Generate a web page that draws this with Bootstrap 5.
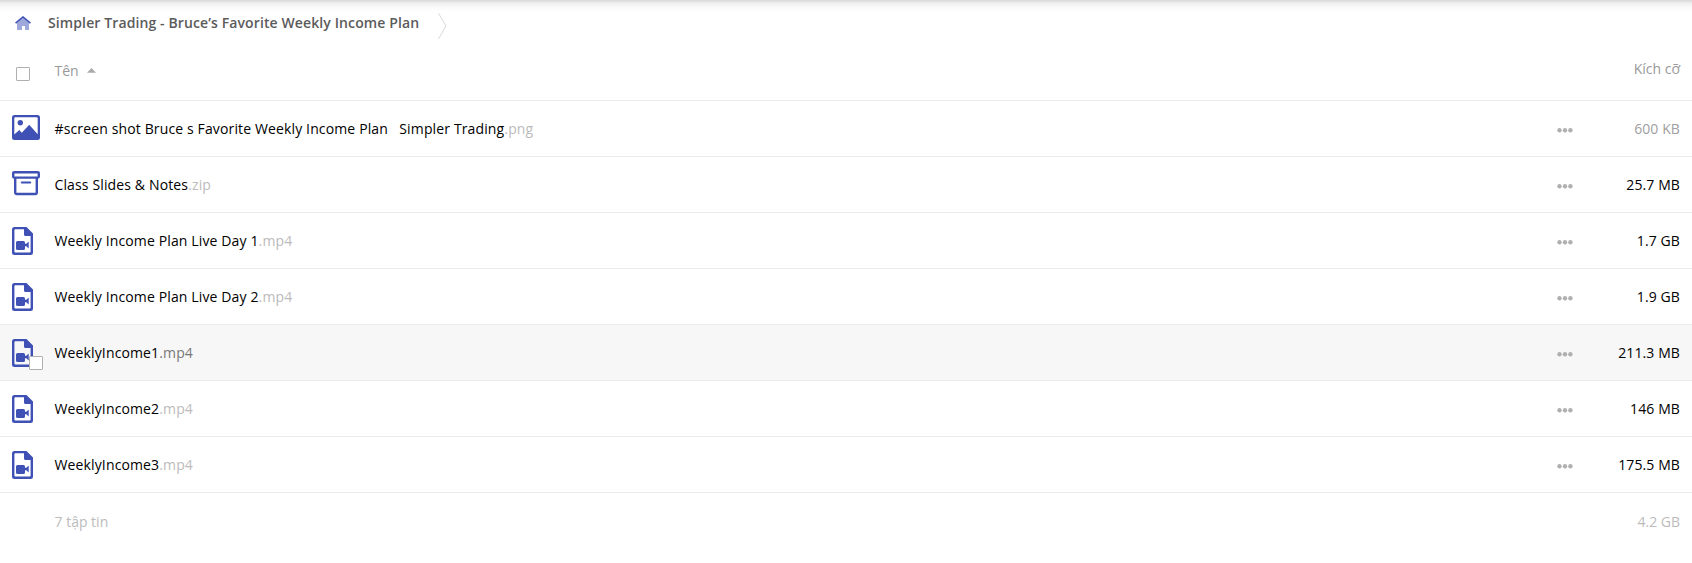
<!DOCTYPE html>
<html lang="vi">
<head>
<meta charset="utf-8">
<meta name="viewport" content="width=device-width, initial-scale=1">
<title>Simpler Trading</title>
<link rel="stylesheet" href="https://cdn.jsdelivr.net/npm/bootstrap@5.3.0/dist/css/bootstrap.min.css">
<style>
body{font-family:"Open Sans","Noto Sans",sans-serif;font-size:14px;line-height:20px;color:#000;background:#fff;overflow:hidden}
.top-shade{height:12px;background:linear-gradient(#d9d9d9 0,#dedede 1px,#efefef 3px,#f9f9f9 7px,#fff 12px)}
.crumbs{height:32px;padding-left:15px}
.crumbs svg{flex:none}
.home-icon{margin-top:4px}
.crumb-arrow{margin:1px 0 0 19px}
.crumb-title{font-weight:600;color:#5b5b5b;margin-left:17px;line-height:22px;letter-spacing:.112px}
.file-row{height:56px;border-bottom:1px solid #ebebeb;padding:0 12px}
.head-row{height:57px;color:#999}
.head-row .box{margin:23px 0 0 4px}
.name-head{padding-top:17px}
.size-head{padding-top:15px}
.sort-arrow{margin:7px 0 0 8.500px}
.icon-col{width:42.500px;flex:none;align-self:flex-start}
.type-icon{display:block;margin-top:14px}
.file-name{letter-spacing:.135px}
.ext{color:#bbb}
.file-row.hovered{background:#f7f7f7}
.hovered .ext{color:#777}
.size-col{width:107px;text-align:right;letter-spacing:.1px}
.muted-size{color:#a0a0a0}
.box{width:14px;height:14px;border:1px solid #b0b0b0;border-radius:1px;background:#fff}
.pick{left:17px;top:31px}
.foot-row{height:58px;padding:0 12px;color:#bbb}
</style>
</head>
<body>
<svg class="d-none">
<symbol id="image" viewBox="0 0 28 25"><path fill="#3f51b5" fill-rule="evenodd" d="M2.500 0h23A2.500 2.500 0 0 1 28 2.500v20a2.500 2.500 0 0 1-2.500 2.500h-23A2.500 2.500 0 0 1 0 22.500v-20A2.500 2.500 0 0 1 2.500 0zM3.300 2.300q-1 0-1 1V19.500l5-4.500 2.500 2.800 7.400-8L25.700 19.200V3.300q0-1-1-1z"/><circle cx="8.300" cy="7.700" r="2.700" fill="#3f51b5"/></symbol>
<symbol id="archive" viewBox="0 0 28 25"><g fill="none" stroke="#3f51b5" stroke-width="2.400"><rect x="1.200" y="1.200" width="25.600" height="5.400" rx="1"/><path d="M3.200 6.500V21.500a1.500 1.500 0 0 0 1.500 1.500h18.600A1.500 1.500 0 0 0 24.800 21.500V6.500"/><path stroke-width="2.100" d="M9.800 11.500h8.400" stroke-linecap="round"/></g></symbol>
<symbol id="video" viewBox="0 0 21 28"><path fill="#3f51b5" fill-rule="evenodd" d="M2.500 0H14.500L21 6.500v19a2.500 2.500 0 0 1-2.500 2.500h-16A2.500 2.500 0 0 1 0 25.500v-23A2.500 2.500 0 0 1 2.500 0zM3.400 2.300q-1 0-1 1v21.300q0 1 1 1h14.200q1 0 1-1V9h-5.100Q12 9 12 7.500V2.300z"/><path fill="#3f51b5" d="M5.500 14h6q1.500 0 1.500 1.500v1.300h1.300l2.400-2.300v7l-2.400-2.200H13v2.200q0 1.500-1.500 1.500h-6Q4 23 4 21.500v-6Q4 14 5.500 14z"/></symbol>
<symbol id="dots" viewBox="0 0 16 5"><g fill="#b0b0b0"><circle cx="2.500" cy="2.300" r="2.200"/><circle cx="8" cy="2.300" r="2.200"/><circle cx="13.400" cy="2.300" r="2.200"/></g></symbol>
</svg>
<div class="top-shade"></div>
<nav class="crumbs d-flex">
<svg class="home-icon" width="16" height="14" viewBox="0 0 16 14"><path fill="#9fa8da" d="M2 7l6-5.500L14 7v7h-4v-4H7v4H2z"/><path d="M.6 7.200L8 1l7.400 6.200" fill="none" stroke="#3f51b5" stroke-width="1.600"/></svg>
<span class="crumb-title">Simpler Trading - Bruce’s Favorite Weekly Income Plan</span>
<svg class="crumb-arrow" width="9" height="27" viewBox="0 0 9 27"><path d="M.5.300L8 13 .5 26" fill="none" stroke="#d8d8d8"/></svg>
</nav>
<main id="files">
<div class="file-row head-row d-flex"><div class="icon-col"><div class="box"></div></div><div class="name-head flex-grow-1 d-flex">Tên<svg class="sort-arrow" width="9" height="5" viewBox="0 0 9 5"><path fill="#aaa" d="M4.500 0L9 4.700H0z"/></svg></div><div class="size-head">Kích cỡ</div></div>
<div class="file-row d-flex align-items-center"><div class="icon-col"><svg class="type-icon" width="28" height="25"><use href="#image"/></svg></div><div class="file-name flex-grow-1">#screen shot Bruce s Favorite Weekly Income Plan &nbsp; Simpler Trading<span class="ext">.png</span></div><svg class="mt-1" width="16" height="5"><use href="#dots"/></svg><div class="size-col muted-size">600 KB</div></div>
<div class="file-row d-flex align-items-center"><div class="icon-col"><svg class="type-icon" width="28" height="25"><use href="#archive"/></svg></div><div class="file-name flex-grow-1">Class Slides &amp; Notes<span class="ext">.zip</span></div><svg class="mt-1" width="16" height="5"><use href="#dots"/></svg><div class="size-col">25.7 MB</div></div>
<div class="file-row d-flex align-items-center"><div class="icon-col"><svg class="type-icon" width="21" height="28"><use href="#video"/></svg></div><div class="file-name flex-grow-1">Weekly Income Plan Live Day 1<span class="ext">.mp4</span></div><svg class="mt-1" width="16" height="5"><use href="#dots"/></svg><div class="size-col">1.7 GB</div></div>
<div class="file-row d-flex align-items-center"><div class="icon-col"><svg class="type-icon" width="21" height="28"><use href="#video"/></svg></div><div class="file-name flex-grow-1">Weekly Income Plan Live Day 2<span class="ext">.mp4</span></div><svg class="mt-1" width="16" height="5"><use href="#dots"/></svg><div class="size-col">1.9 GB</div></div>
<div class="file-row hovered d-flex align-items-center"><div class="icon-col position-relative"><svg class="type-icon" width="21" height="28"><use href="#video"/></svg><div class="box pick position-absolute"></div></div><div class="file-name flex-grow-1">WeeklyIncome1<span class="ext">.mp4</span></div><svg class="mt-1" width="16" height="5"><use href="#dots"/></svg><div class="size-col">211.3 MB</div></div>
<div class="file-row d-flex align-items-center"><div class="icon-col"><svg class="type-icon" width="21" height="28"><use href="#video"/></svg></div><div class="file-name flex-grow-1">WeeklyIncome2<span class="ext">.mp4</span></div><svg class="mt-1" width="16" height="5"><use href="#dots"/></svg><div class="size-col">146 MB</div></div>
<div class="file-row d-flex align-items-center"><div class="icon-col"><svg class="type-icon" width="21" height="28"><use href="#video"/></svg></div><div class="file-name flex-grow-1">WeeklyIncome3<span class="ext">.mp4</span></div><svg class="mt-1" width="16" height="5"><use href="#dots"/></svg><div class="size-col">175.5 MB</div></div>
<div class="foot-row d-flex align-items-center"><div class="icon-col"></div><div class="flex-grow-1">7 tập tin</div><div>4.2 GB</div></div>
</main>
<script src="https://cdn.jsdelivr.net/npm/bootstrap@5.3.0/dist/js/bootstrap.bundle.min.js"></script>
</body>
</html>
